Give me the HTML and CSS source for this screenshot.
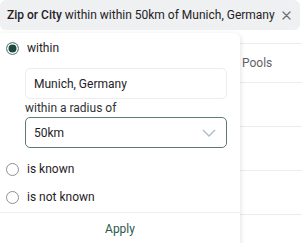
FILE: index.html
```html
<!DOCTYPE html>
<html lang="en">
<head>
  <meta charset="UTF-8">
  <title>Location filter</title>
  <link rel="stylesheet" href="styles.css">
</head>
<body>
  <!-- Active filter chip -->
  <div class="filter-chip">
    <span class="chip-text"><b>Zip or City</b> within within 50km of Munich, Germany</span>
    <svg class="chip-close" width="9" height="9" viewBox="0 0 9 9">
      <path d="M1 1L8 8M8 1L1 8" stroke="#6b6f75" stroke-width="1.3" stroke-linecap="round" fill="none"/>
    </svg>
  </div>

  <div class="content">
    <!-- Table behind the popover -->
    <div class="list">
      <div class="row row-first"><span></span><span class="cell">Pools</span></div>
      <div class="row"><span></span><span class="cell"></span></div>
      <div class="row"><span></span><span class="cell"></span></div>
      <div class="row"><span></span><span class="cell"></span></div>
      <div class="row"><span></span><span class="cell"></span></div>
    </div>

    <!-- Filter popover -->
    <div class="popover">
      <label class="option">
        <span class="radio checked"></span>
        <span>within</span>
      </label>
      <div class="radius-fields">
        <div class="text-input">Munich, Germany</div>
        <div class="field-label">within a radius of</div>
        <div class="select">
          <span>50km</span>
          <svg width="14" height="8" viewBox="0 0 14 8">
            <path d="M1 1L7 7L13 1" stroke="#a9bac9" stroke-width="1.3" fill="none"/>
          </svg>
        </div>
      </div>
      <label class="option option-gap">
        <span class="radio"></span>
        <span>is known</span>
      </label>
      <label class="option option-gap">
        <span class="radio"></span>
        <span>is not known</span>
      </label>
      <div class="popover-footer">
        <button class="apply">Apply</button>
      </div>
    </div>
  </div>
</body>
</html>
```

FILE: styles.css
```css
/* Basic styling */
body {
  margin: 0;
  font-family: Roboto, "Noto Sans", sans-serif;
  font-size: 12px;
  color: #1f2226;
  background: #fff;
  overflow: hidden;
}
.filter-chip {
  display: flex;
  align-items: center;
  height: 30px;
  margin-right: 2px;
  padding: 0 9px 0 7px;
  background: #eff0f2;
  border-radius: 6px;
  font-size: 12px;
}
.chip-text {
  flex: 1;
  white-space: nowrap;
}
.chip-text b {
  font-weight: 500;
}
.chip-close {
  flex: none;
}
.content {
  position: relative;
  padding-top: 13px;
}
/* Rows of the table underneath */
.row {
  display: grid;
  grid-template-columns: 242px 1fr;
  align-items: center;
  height: 44px;
  border-top: 1px solid #ececec;
  box-sizing: border-box;
}
.row-first {
  height: 39px;
}
.cell {
  color: #5f6368;
}
/* Popover */
.popover {
  position: absolute;
  top: 3px;
  left: 0;
  width: 240px;
  height: 240px;
  padding-top: 8px;
  box-sizing: border-box;
  background: #fff;
  border-radius: 0 6px 6px 0;
  box-shadow: 1px 1px 5px rgba(0, 0, 0, 0.1);
  display: flex;
  flex-direction: column;
}
.option {
  display: flex;
  align-items: center;
  gap: 8px;
  height: 14px;
  padding-left: 6px;
}
.option-gap {
  margin-top: 14px;
}
.radio {
  width: 13px;
  height: 13px;
  box-sizing: border-box;
  border: 1px solid #8a8f96;
  border-radius: 50%;
  flex: none;
}
.radio.checked {
  border: 1px solid #6f8f86;
  background: #1c4a40;
  box-shadow: inset 0 0 0 1.5px #fff;
}
.radius-fields {
  margin-left: 25px;
  width: 202px;
}
.text-input {
  margin-top: 13px;
  height: 31px;
  box-sizing: border-box;
  padding: 0 8px;
  border: 1px solid #ededed;
  border-radius: 5px;
  display: flex;
  align-items: center;
}
.field-label {
  margin-top: 1px;
  line-height: 16px;
  color: #2e3236;
}
.select {
  margin-top: 1px;
  height: 31px;
  box-sizing: border-box;
  padding: 0 10px 0 8px;
  border: 1px solid #5c7b72;
  border-radius: 5px;
  display: flex;
  align-items: center;
  justify-content: space-between;
}
.popover-footer {
  margin-top: 8px;
  border-top: 1px solid #efefef;
  padding-top: 8px;
  text-align: center;
}
.apply {
  border: none;
  background: none;
  font: inherit;
  line-height: 16px;
  color: #2b5a4c;
  padding: 0;
  cursor: pointer;
}
```
